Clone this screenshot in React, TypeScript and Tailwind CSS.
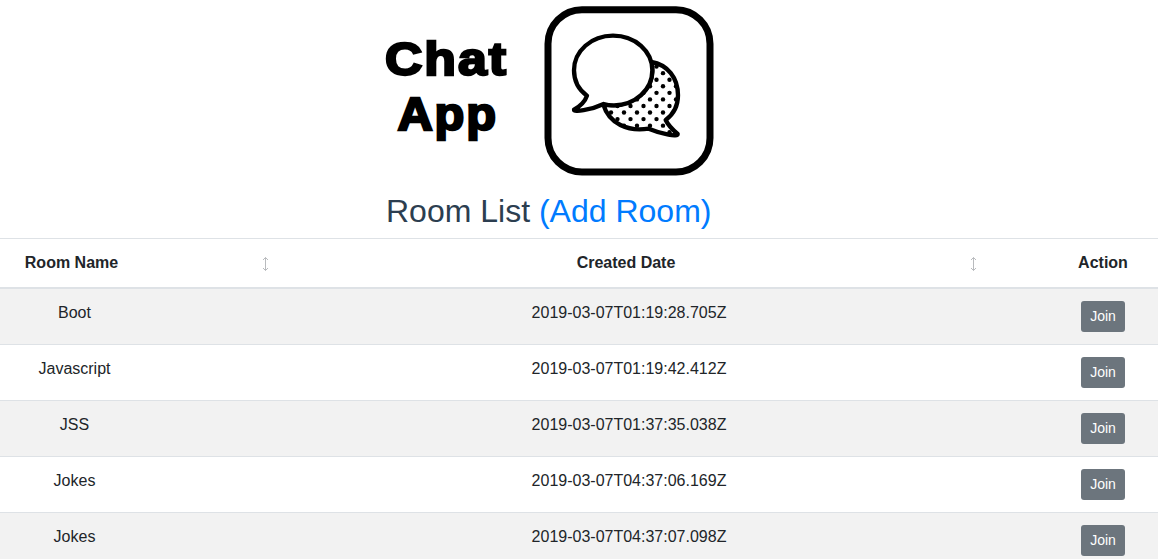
import React from 'react';

const rooms = [
  { name: 'Boot', created: '2019-03-07T01:19:28.705Z' },
  { name: 'Javascript', created: '2019-03-07T01:19:42.412Z' },
  { name: 'JSS', created: '2019-03-07T01:37:35.038Z' },
  { name: 'Jokes', created: '2019-03-07T04:37:06.169Z' },
  { name: 'Jokes', created: '2019-03-07T04:37:07.098Z' },
];

// Dots sit on a diagonal lattice: alternate rows are shifted by half a step.
const dots: { x: number; y: number }[] = [];
for (let row = 0; row < 12; row++) {
  for (let col = 0; col < 8; col++) {
    dots.push({ x: 174 + col * 39 + (row % 2 ? 19.5 : 0), y: 180 + row * 19.7 });
  }
}

const BACK_BUBBLE =
  'M334 186 C383 194 414 234 414 286 C414 318 402 342 377 360 C386 379 400 391 413 402 C413 412 368 403 326 386 C264 396 207 371 190 314 C270 328 355 270 334 186 Z';

function Logo() {
  return (
    <svg className="block h-[180px] w-[350px]" viewBox="0 0 350 180" role="img" aria-label="Chat App">
      <g
        fontFamily="'Liberation Sans', Arial, sans-serif"
        fontWeight="700"
        fontSize="46.5"
        letterSpacing="1.8"
        fill="#000"
        stroke="#000"
        strokeWidth="2.4"
      >
        <text x="15" y="74.5" textLength="123" lengthAdjust="spacingAndGlyphs">Chat</text>
        <text x="27.5" y="130.3" textLength="100.5" lengthAdjust="spacingAndGlyphs">App</text>
      </g>
      <g transform="translate(170 0) scale(0.33333)" fill="none" stroke="#000" strokeLinejoin="round">
        <rect x="24" y="29" width="486" height="487" rx="102" strokeWidth="21" />
        <clipPath id="back-bubble">
          <path d={BACK_BUBBLE} />
        </clipPath>
        <g clipPath="url(#back-bubble)" fill="#000" stroke="none">
          {dots.map((d, i) => (
            <circle key={i} cx={d.x} cy={d.y} r="6.6" />
          ))}
        </g>
        <path d={BACK_BUBBLE} strokeWidth="13" />
        <path
          d="M141 287 C114 268 102 243 102 211 C102 153 154 107 219 107 C286 107 337 154 337 211 C337 270 285 316 222 316 C211 316 201 315 191 312 C151 331 100 337 102 329 C122 318 136 302 141 287 Z"
          fill="#fff"
          strokeWidth="13"
        />
      </g>
    </svg>
  );
}

function SortIcon() {
  return (
    <svg
      className="mt-[17px] h-4 w-[7px] justify-self-center"
      viewBox="0 0 7 16"
      fill="none"
      stroke="#b9bbbe"
      strokeWidth="1"
    >
      <path d="M3.5 1.5V14.5M1 4L3.5 1.5L6 4M1 12L3.5 14.5L6 12" />
    </svg>
  );
}

export default function App() {
  return (
    <div className="h-[559px] w-[1158px] overflow-hidden bg-white font-['Liberation_Sans',Arial,sans-serif] text-base text-[#212529]">
      <header className="flex h-[238px] flex-col pl-[370px]">
        <Logo />
        <h1 className="pt-[12px] pl-4 text-[32px] leading-[38px] whitespace-nowrap text-[#2c3e50]">
          Room List <a className="text-[#007bff]" href="#add">(Add Room)</a>
        </h1>
      </header>
      <main>
        <div className="grid h-[51px] grid-cols-[149px_232px_496px_192px_68px_21px] border-t border-b-2 border-[#dee2e6] text-center font-bold">
          <div className="pt-3 pr-[6px]">Room Name</div>
          <SortIcon />
          <div className="pt-3 pr-[6px]">Created Date</div>
          <SortIcon />
          <div className="pt-3">Action</div>
        </div>
        {rooms.map((room, i) => (
          <div
            key={i}
            className="grid h-14 grid-cols-[149px_232px_496px_192px_68px_21px] border-t border-[#dee2e6] pt-3 text-center odd:bg-white even:bg-[#f2f2f2] nth-2:h-[55px] nth-2:border-t-0"
          >
            <div>{room.name}</div>
            <div />
            <div>{room.created}</div>
            <div />
            <button className="h-[31px] w-11 justify-self-center rounded-[3px] bg-[#6c757d] text-sm leading-[21px] text-white">
              Join
            </button>
          </div>
        ))}
      </main>
    </div>
  );
}
